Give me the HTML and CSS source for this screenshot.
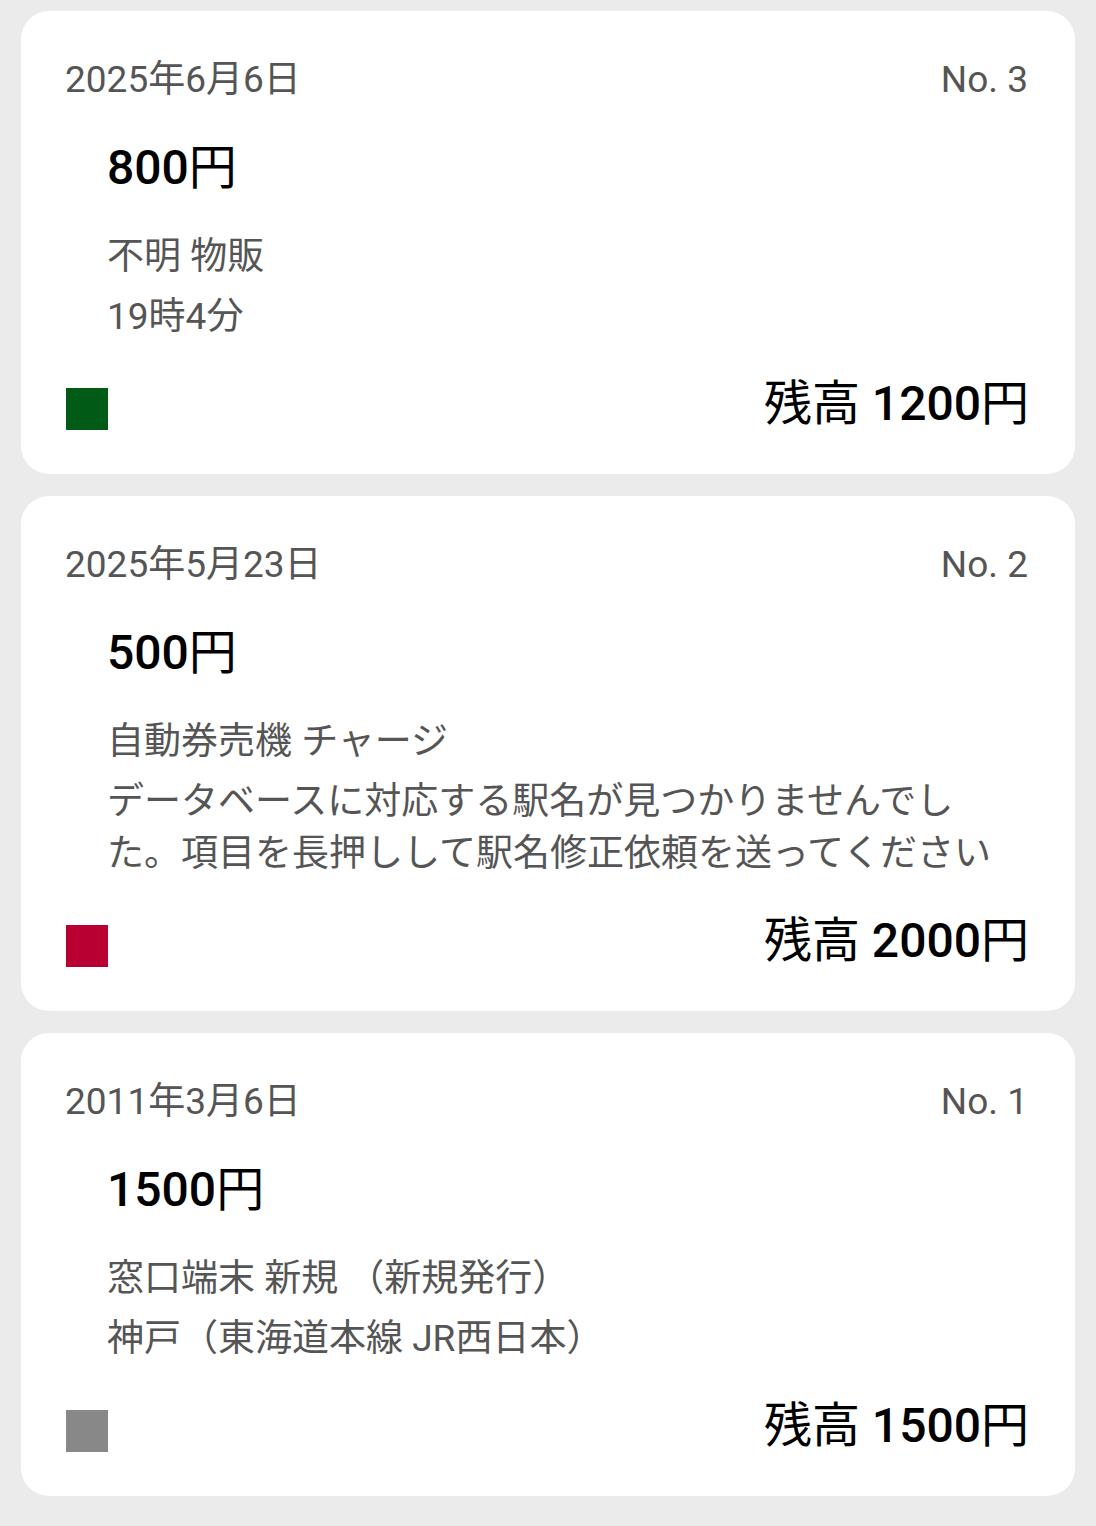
FILE: index.html
```html
<!DOCTYPE html>
<html lang="ja">
<head>
<meta charset="utf-8">
<link rel="stylesheet" href="styles.css">
</head>
<body>
<main class="list">
  <section class="card">
    <div class="head"><span class="date">2025年6月6日</span><span class="no">No. 3</span></div>
    <div class="amount">800<span class="cjk">円</span></div>
    <div class="detail">
      <div class="kind">不明 物販</div>
      <div class="place">19時4分</div>
    </div>
    <div class="foot"><span class="swatch green"></span><span class="balance"><span class="cjk">残高</span> 1200<span class="cjk">円</span></span></div>
  </section>
  <section class="card">
    <div class="head"><span class="date">2025年5月23日</span><span class="no">No. 2</span></div>
    <div class="amount">500<span class="cjk">円</span></div>
    <div class="detail">
      <div class="kind">自動券売機 チャージ</div>
      <div class="place">データベースに対応する駅名が見つかりませんでした。項目を長押しして駅名修正依頼を送ってください</div>
    </div>
    <div class="foot"><span class="swatch red"></span><span class="balance"><span class="cjk">残高</span> 2000<span class="cjk">円</span></span></div>
  </section>
  <section class="card">
    <div class="head"><span class="date">2011年3月6日</span><span class="no">No. 1</span></div>
    <div class="amount">1500<span class="cjk">円</span></div>
    <div class="detail">
      <div class="kind">窓口端末 新規 （新規発行）</div>
      <div class="place">神戸（東海道本線 JR西日本）</div>
    </div>
    <div class="foot"><span class="swatch grey"></span><span class="balance"><span class="cjk">残高</span> 1500<span class="cjk">円</span></span></div>
  </section>
</main>
</body>
</html>
```

FILE: styles.css
```css
html, body {
  margin: 0;
  padding: 0;
  background: #ebebeb;
}
body {
  font-family: Roboto, "Noto Sans CJK JP", sans-serif;
  width: 1096px;
  height: 1526px;
  overflow: hidden;
}
.list {
  display: flex;
  flex-direction: column;
  gap: 22px;
  padding: 11px 21px 0 21px;
}
.card {
  background: #ffffff;
  border-radius: 28px;
  padding: 44px 45px 40px 44px;
  display: flex;
  flex-direction: column;
}
.head {
  display: flex;
  justify-content: space-between;
  align-items: center;
  height: 50px;
  line-height: 50px;
  font-size: 37px;
  color: #555555;
}
.no {
  margin-right: 2px;
}
.amount {
  margin: 33px 0 0 42px;
  font-size: 48px;
  line-height: 60px;
  font-weight: 500;
  color: #000000;
}
.cjk {
  font-weight: 400;
}
.detail {
  margin: 33px 0 0 42px;
  font-size: 37px;
  line-height: 52px;
  color: #555555;
  max-width: 898px;
  display: flex;
  flex-direction: column;
  gap: 8px;
}
.foot {
  margin-top: 31px;
  display: flex;
  justify-content: space-between;
  align-items: flex-end;
  height: 60px;
}
.swatch {
  width: 42px;
  height: 42px;
  margin: 0 0 4px 1px;
}
.green { background: #025a17; }
.red { background: #b80032; }
.grey { background: #888888; }
.balance {
  font-size: 48px;
  line-height: 60px;
  font-weight: 500;
  color: #000000;
  margin-right: 1px;
}
```
